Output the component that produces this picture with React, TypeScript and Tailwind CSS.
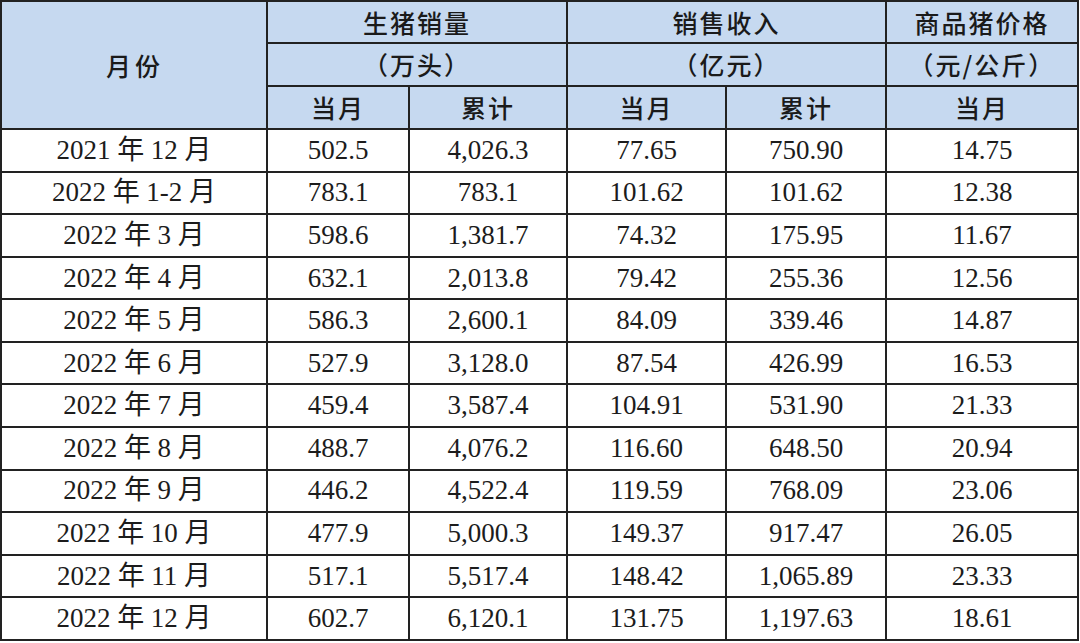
import React from "react";

const rows: string[][] = [
  ["2021 年 12 月", "502.5", "4,026.3", "77.65", "750.90", "14.75"],
  ["2022 年 1-2 月", "783.1", "783.1", "101.62", "101.62", "12.38"],
  ["2022 年 3 月", "598.6", "1,381.7", "74.32", "175.95", "11.67"],
  ["2022 年 4 月", "632.1", "2,013.8", "79.42", "255.36", "12.56"],
  ["2022 年 5 月", "586.3", "2,600.1", "84.09", "339.46", "14.87"],
  ["2022 年 6 月", "527.9", "3,128.0", "87.54", "426.99", "16.53"],
  ["2022 年 7 月", "459.4", "3,587.4", "104.91", "531.90", "21.33"],
  ["2022 年 8 月", "488.7", "4,076.2", "116.60", "648.50", "20.94"],
  ["2022 年 9 月", "446.2", "4,522.4", "119.59", "768.09", "23.06"],
  ["2022 年 10 月", "477.9", "5,000.3", "149.37", "917.47", "26.05"],
  ["2022 年 11 月", "517.1", "5,517.4", "148.42", "1,065.89", "23.33"],
  ["2022 年 12 月", "602.7", "6,120.1", "131.75", "1,197.63", "18.61"],
];

const head =
  "bg-[#c6d9f0] flex items-center justify-center text-[25px] font-medium tracking-[2px] text-[#1a1a1a] [font-family:'Noto_Sans_CJK_SC',sans-serif] leading-none";
const cell =
  "bg-white flex items-center justify-center text-[27px] text-[#1c1c1c] [font-family:'Liberation_Serif','Noto_Sans_CJK_SC',serif] leading-none";

export default function App() {
  return (
    <div className="w-[1080px] h-[643px] bg-white">
      <div className="w-[1079px] h-[641px] bg-[#222] p-[2px] grid gap-[2px] grid-cols-[264px_140px_156px_157px_158px_190px] grid-rows-[40px_41px_41px_repeat(12,1fr)]">
        <div className={`${head} row-span-3 col-start-1 row-start-1 tracking-[4px] pl-[2px]`}>月份</div>
        <div className={`${head} col-span-2 col-start-2 row-start-1`}>生猪销量</div>
        <div className={`${head} col-span-2 col-start-4 row-start-1`}>销售收入</div>
        <div className={`${head} col-start-6 row-start-1`}>商品猪价格</div>
        <div className={`${head} col-span-2 col-start-2 row-start-2`}>（万头）</div>
        <div className={`${head} col-span-2 col-start-4 row-start-2`}>（亿元）</div>
        <div className={`${head} col-start-6 row-start-2 tracking-[1px]`}>（元/公斤）</div>
        <div className={`${head} col-start-2 row-start-3`}>当月</div>
        <div className={`${head} col-start-3 row-start-3`}>累计</div>
        <div className={`${head} col-start-4 row-start-3`}>当月</div>
        <div className={`${head} col-start-5 row-start-3`}>累计</div>
        <div className={`${head} col-start-6 row-start-3`}>当月</div>
        {rows.map((r, i) =>
          r.map((v, j) => (
            <div key={`${i}-${j}`} className={cell}>
              {v}
            </div>
          ))
        )}
      </div>
    </div>
  );
}
